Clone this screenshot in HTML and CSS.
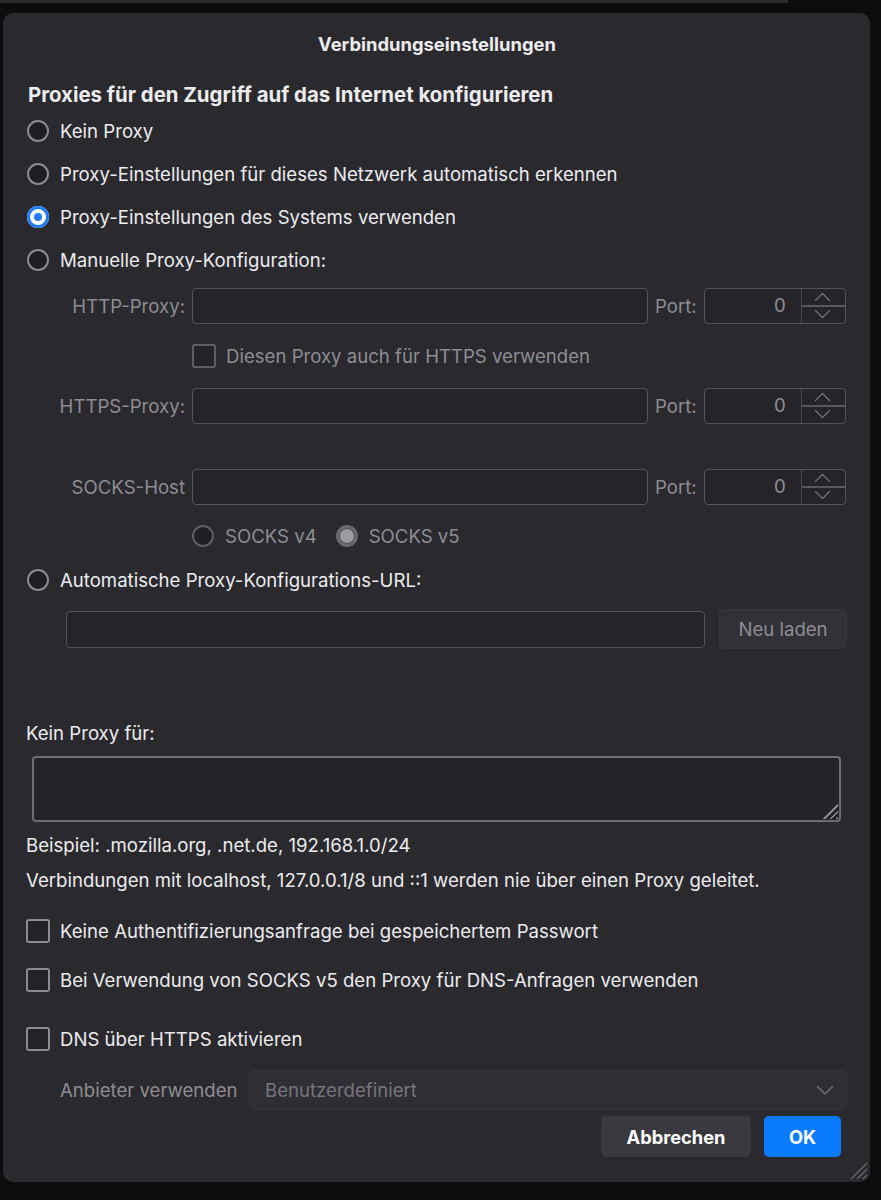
FILE: index.html
```html
<!DOCTYPE html>
<html lang="de">
  <head>
    <meta charset="UTF-8" />
    <meta name="viewport" content="width=device-width, initial-scale=1.0" />
    <title>Verbindungseinstellungen</title>
    <link rel="stylesheet" href="styles.css">
  </head>
  <body>
    <div class="topbar"></div>
    <div class="dialog">
      <div class="title">Verbindungseinstellungen</div>

      <div class="heading">Proxies für den Zugriff auf das Internet konfigurieren</div>

      <!-- proxy mode -->
      <div class="row radio-row"><span class="radio"></span>Kein Proxy</div>
      <div class="row radio-row"><span class="radio"></span>Proxy-Einstellungen für dieses Netzwerk automatisch erkennen</div>
      <div class="row radio-row"><span class="radio checked"></span>Proxy-Einstellungen des Systems verwenden</div>
      <div class="row radio-row"><span class="radio"></span>Manuelle Proxy-Konfiguration:</div>

      <!-- manual proxy fields -->
      <div class="row field-row first">
        <span class="field-label">HTTP-Proxy:</span>
        <span class="input host"></span>
        <span class="port-label">Port:</span>
        <span class="port"><span class="port-value">0</span><span class="spin"><span class="spin-up"></span><span class="spin-down"></span></span></span>
      </div>
      <div class="row check-row indent">
        <span class="checkbox"></span><span class="disabled">Diesen Proxy auch für HTTPS verwenden</span>
      </div>
      <div class="row field-row https">
        <span class="field-label">HTTPS-Proxy:</span>
        <span class="input host"></span>
        <span class="port-label">Port:</span>
        <span class="port"><span class="port-value">0</span><span class="spin"><span class="spin-up"></span><span class="spin-down"></span></span></span>
      </div>
      <div class="row field-row socks">
        <span class="field-label">SOCKS-Host</span>
        <span class="input host"></span>
        <span class="port-label">Port:</span>
        <span class="port"><span class="port-value">0</span><span class="spin"><span class="spin-up"></span><span class="spin-down"></span></span></span>
      </div>
      <div class="row socks-row indent">
        <span class="radio dim"></span><span class="disabled">SOCKS v4</span>
        <span class="radio dim on"></span><span class="disabled">SOCKS v5</span>
      </div>

      <div class="row radio-row auto"><span class="radio"></span>Automatische Proxy-Konfigurations-URL:</div>
      <div class="row url-row">
        <span class="input url"></span>
        <span class="btn reload">Neu laden</span>
      </div>

      <!-- exceptions -->
      <div class="plain no-proxy">Kein Proxy für:</div>
      <div class="textarea"><span class="grip"></span></div>
      <div class="plain example">Beispiel: .mozilla.org, .net.de, 192.168.1.0/24</div>
      <div class="plain note">Verbindungen mit localhost, 127.0.0.1/8 und ::1 werden nie über einen Proxy geleitet.</div>

      <div class="row check-row opt first-opt"><span class="checkbox"></span>Keine Authentifizierungsanfrage bei gespeichertem Passwort</div>
      <div class="row check-row opt"><span class="checkbox"></span>Bei Verwendung von SOCKS v5 den Proxy für DNS-Anfragen verwenden</div>
      <div class="row check-row opt doh"><span class="checkbox"></span>DNS über HTTPS aktivieren</div>

      <div class="row provider-row">
        <span class="disabled provider-label">Anbieter verwenden</span>
        <span class="select">Benutzerdefiniert
          <svg class="chevron" width="18" height="10" viewBox="0 0 18 10"><path d="M1 1l8 8 8-8" fill="none" stroke="#6f6e74" stroke-width="1.5"/></svg>
        </span>
      </div>

      <div class="actions">
        <span class="btn cancel">Abbrechen</span>
        <span class="btn ok">OK</span>
      </div>

      <svg class="window-grip" width="20" height="20" viewBox="0 0 20 20">
        <path d="M19 3L3 19M19 9L9 19M19 15L15 19" stroke="#6d6c72" stroke-width="1.3"/>
      </svg>
    </div>
  </body>
</html>
```

FILE: styles.css
```css
/* page behind the dialog */
body {
  margin: 0;
  background: #0c0c0e;
  font-family: Inter, "Noto Sans", sans-serif;
  font-size: 18.6px;
  color: #ececee;
}

.topbar {
  width: 788px;
  height: 3px;
  background: #2c2b30;
}

/* the dialog sheet */
.dialog {
  position: relative;
  box-sizing: border-box;
  width: 867px;
  height: 1169px;
  margin: 10px 0 0 3px;
  padding: 17px 23px 0 24px;
  background: #2a292e;
  border-radius: 10px;
  display: flex;
  flex-direction: column;
}

.title {
  text-align: center;
  font-weight: 700;
  font-size: 18.4px;
  line-height: 28px;
}

.heading {
  margin-top: 23px;
  margin-left: 1px;
  font-weight: 700;
  font-size: 20.4px;
  line-height: 28px;
}

.row {
  display: flex;
  align-items: center;
}

.radio-row {
  height: 43px;
  gap: 11px;
}

.radio-row.auto {
  margin-top: 6px;
}

/* radio buttons */
.radio {
  box-sizing: border-box;
  width: 22px;
  height: 22px;
  border-radius: 50%;
  border: 2px solid #8c8b91;
  background: #1f1e23;
  flex: none;
}

.radio.checked {
  border: none;
  background: #1f7cf6;
  box-shadow: inset 0 0 0 3px #1f7cf6, inset 0 0 0 7px #ffffff;
}

.radio.dim {
  border-color: #5e5d63;
}

.radio.dim.on {
  border: 3px solid #6b6a70;
  background: #9d9ca2;
  box-shadow: inset 0 0 0 1px #48474d;
}

/* checkboxes */
.checkbox {
  box-sizing: border-box;
  width: 24px;
  height: 24px;
  border: 2px solid #8c8b91;
  border-radius: 3px;
  background: #232227;
  flex: none;
}

.check-row {
  height: 32px;
  gap: 10px;
}

.check-row.indent .checkbox {
  border-color: #5e5d63;
}

.indent {
  margin-left: 165px;
}

.disabled {
  color: #8e8d93;
}

/* manual proxy fields */
.field-row {
  height: 36px;
}

.field-row.first {
  margin-top: 7px;
}

.check-row.indent {
  margin-top: 16px;
}

.field-row.https {
  margin-top: 16px;
}

.field-row.socks {
  margin-top: 45px;
}

.field-label {
  width: 158px;
  text-align: right;
  color: #8e8d93;
  margin-right: 7px;
  flex: none;
}

.input {
  box-sizing: border-box;
  height: 36px;
  border: 1.5px solid #545359;
  border-radius: 4px;
  background: #252429;
  display: block;
}

.host {
  width: 456px;
}

.port-label {
  color: #8e8d93;
  margin: 0 7px 0 7px;
}

.port {
  box-sizing: border-box;
  width: 142px;
  height: 36px;
  border: 1.5px solid #545359;
  border-radius: 4px;
  background: #252429;
  display: flex;
}

.port-value {
  flex: 1;
  text-align: right;
  padding-right: 15px;
  line-height: 33px;
  color: #8e8d93;
}

/* stepper arrows */
.spin {
  width: 43px;
  display: flex;
  flex-direction: column;
  border-left: 1px solid #4a494f;
}

.spin-up,
.spin-down {
  flex: 1;
  position: relative;
}

.spin-up {
  border-bottom: 2px solid #58575d;
}

.spin-up::after,
.spin-down::after {
  content: "";
  position: absolute;
  left: 15px;
  width: 10px;
  height: 10px;
  border-left: 1.5px solid #85848a;
  border-top: 1.5px solid #85848a;
}

.spin-up::after {
  top: 6px;
  transform: rotate(45deg);
}

.spin-down::after {
  top: -2px;
  transform: rotate(225deg);
}

.socks-row {
  height: 32px;
  margin-top: 15px;
  gap: 11px;
}

.socks-row .disabled {
  margin-right: 8px;
}

/* autoconfig URL */
.url-row {
  height: 40px;
  margin-top: 8px;
  margin-left: 39px;
  gap: 14px;
}

.url {
  width: 639px;
  height: 37px;
}

.btn {
  box-sizing: border-box;
  display: flex;
  align-items: center;
  justify-content: center;
  border-radius: 5px;
}

.reload {
  width: 128px;
  height: 40px;
  background: #323137;
  border: 1px solid #38373d;
  color: #8e8d93;
}

/* exceptions */
.plain {
  line-height: 24px;
  margin-left: -1px;
}

.no-proxy {
  margin-top: 72px;
}

.textarea {
  position: relative;
  box-sizing: border-box;
  width: 809px;
  height: 66px;
  margin: 11px 0 0 5px;
  border: 2px solid #6e6d73;
  border-radius: 4px;
  background: #242328;
}

.grip {
  position: absolute;
  right: 1px;
  bottom: 1px;
  width: 16px;
  height: 16px;
  background: repeating-linear-gradient(135deg, transparent 0 3px, #8a898f 3px 4.5px);
  clip-path: polygon(100% 0, 100% 100%, 0 100%);
}

.example {
  margin-top: 11px;
}

.note {
  margin-top: 11px;
}

.opt {
  height: 34px;
  margin-top: 15px;
  margin-left: -1px;
}

.opt.first-opt {
  margin-top: 22px;
}

.opt.doh {
  margin-top: 25px;
}

/* DoH provider */
.provider-row {
  height: 40px;
  margin-top: 14px;
  margin-left: 33px;
}

.provider-label {
  width: 189px;
  flex: none;
}

.select {
  box-sizing: border-box;
  width: 598px;
  height: 40px;
  padding: 0 12px 0 15px;
  display: flex;
  align-items: center;
  justify-content: space-between;
  background: #2f2e34;
  border: 1px solid #37363c;
  border-radius: 5px;
  color: #77767c;
}

/* dialog buttons */
.actions {
  display: flex;
  justify-content: flex-end;
  gap: 13px;
  margin-top: 6px;
  margin-right: 6px;
}

.cancel,
.ok {
  height: 41px;
  font-weight: 700;
  font-size: 18.3px;
  color: #ffffff;
}

.cancel {
  width: 150px;
  background: #3a393f;
}

.ok {
  width: 77px;
  background: #0a7bff;
}

.window-grip {
  position: absolute;
  right: 2px;
  bottom: 2px;
}
```
